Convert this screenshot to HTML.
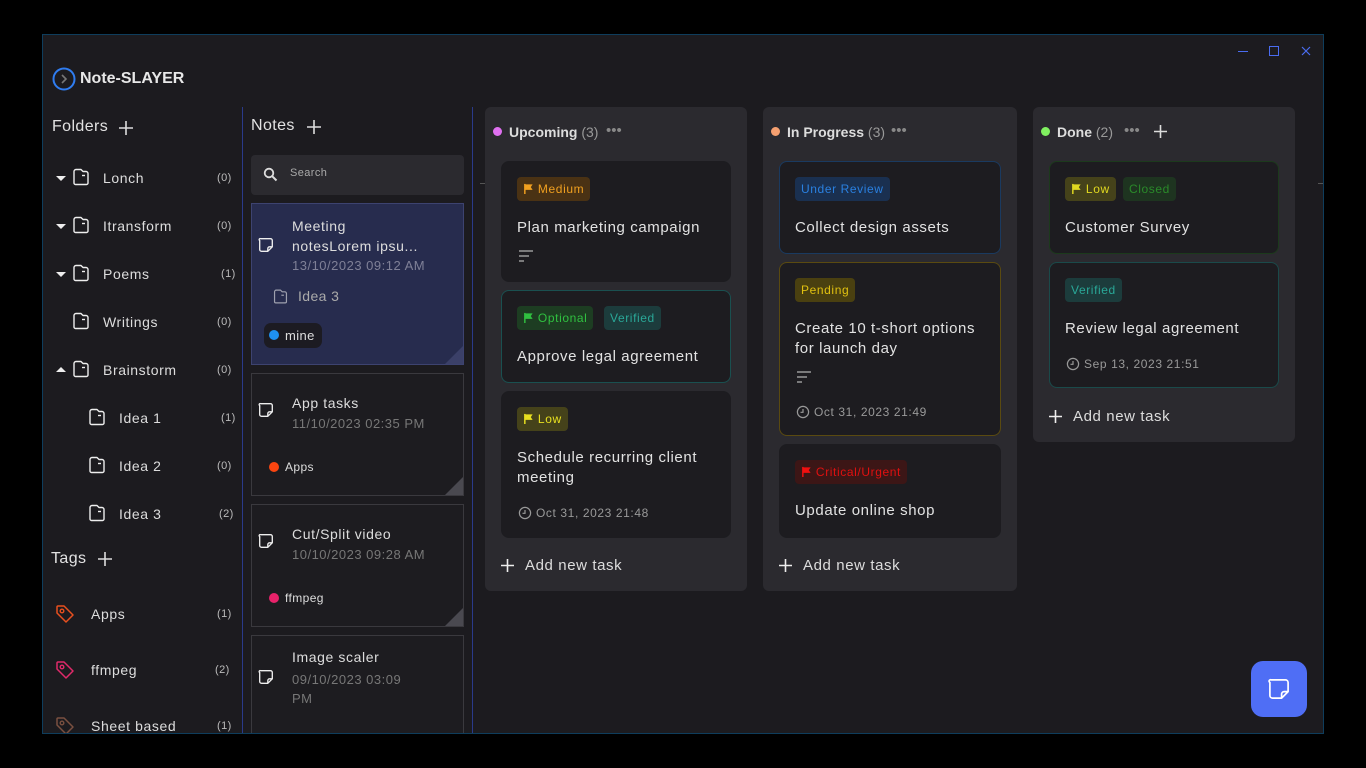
<!DOCTYPE html>
<html><head><meta charset="utf-8"><style>
*{box-sizing:border-box;margin:0;padding:0}
body{width:1366px;height:768px;background:#000;font-family:"Liberation Sans",sans-serif;color:#e6e6e6;position:relative;overflow:hidden;letter-spacing:0.4px}
.a{position:absolute}
#win{left:42px;top:34px;width:1282px;height:700px;background:#1c1b1f;border:1px solid #0e3d5c;overflow:hidden}
.t{font-size:14px;color:#ddd;white-space:nowrap;letter-spacing:0.6px}
.cnt{font-size:11px;color:#bbb}
.col{background:#2b2a2f;border-radius:6px}
.card{background:#1d1c20;border-radius:8px;border:1px solid #1d1c20}
.badge{position:absolute;height:24px;border-radius:4px;font-size:12px;line-height:24px;padding:0 6px;white-space:nowrap;letter-spacing:0.6px}
.ct{font-size:15px;color:#e2e2e2;line-height:20px;letter-spacing:0.6px;white-space:nowrap}
.dt{font-size:12px;color:#999;letter-spacing:0.6px}
.note{background:#1d1c20;border:1px solid #3a393e}
.corner{position:absolute;right:0;bottom:0;width:0;height:0;border-left:18px solid transparent;border-bottom:18px solid #4a4950}
</style></head><body>
<div id="win" class="a">
<div class="a" style="left:1195px;top:16px;width:10px;height:1px;background:#4a6cf0"></div>
<div class="a" style="left:1226px;top:11px;width:10px;height:10px;border:1px solid #4a6cf0"></div>
<svg class="a" style="left:1258px;top:11px" width="10" height="10"><path d="M1 1L9 9M9 1L1 9" stroke="#4a6cf0" stroke-width="1.2"/></svg>
<svg class="a" style="left:9px;top:32px" width="24" height="24"><circle cx="12" cy="12" r="10.5" fill="none" stroke="#2f7cf0" stroke-width="2"/><path d="M10 8l4 4-4 4" fill="none" stroke="#777" stroke-width="1.6"/></svg>
<div class="a" style="left:37px;top:35px;font-size:16px;font-weight:bold;color:#e8e8e8;letter-spacing:0">Note-SLAYER</div>
<div class="a" style="left:199px;top:72px;width:1px;height:628px;background:#2a3a8a"></div>
<div class="a" style="left:429px;top:72px;width:1px;height:628px;background:#2a3a8a"></div>
<div class="a" style="left:1275px;top:148px;width:8px;height:1px;background:#555"></div>
<div class="a" style="left:437px;top:148px;width:6px;height:1px;background:#555"></div>
<div class="a" style="left:9px;top:83px;font-size:16px;color:#e2e2e2">Folders</div>
<svg class="a" style="left:75px;top:85px" width="16" height="16"><path d="M8 1v14M1 8h14" stroke="#ddd" stroke-width="1.6"/></svg>
</div>
<svg width="0" height="0" style="position:absolute"><defs>
<symbol id="fold" viewBox="0 0 20 20"><path d="M5 2.5h5l2 2h3a2 2 0 012 2V16a1.5 1.5 0 01-1.5 1.5h-11A1.5 1.5 0 013 16V4.5a2 2 0 012-2z" fill="none" stroke="#eee" stroke-width="1.4" stroke-linejoin="round"/><path d="M11 8.5h3" stroke="#eee" stroke-width="1.4"/></symbol>
<symbol id="noteic" viewBox="0 0 20 20"><path d="M4 3h11a2 2 0 012 2v7l-5 5H5a2 2 0 01-2-2V5a1 1 0 011-2z" fill="none" stroke="#eee" stroke-width="1.5" stroke-linejoin="round"/><path d="M17 12h-3a2 2 0 00-2 2v3" fill="none" stroke="#eee" stroke-width="1.5"/></symbol>
<symbol id="tag" viewBox="0 0 20 20"><path d="M2 9V3a1 1 0 011-1h6l9 9-7 7z" fill="none" stroke="currentColor" stroke-width="1.5" stroke-linejoin="round"/><circle cx="7" cy="7" r="1.8" fill="none" stroke="currentColor" stroke-width="1.4"/></symbol>
<symbol id="flag" viewBox="0 0 12 12"><path d="M2 1v11" stroke="currentColor" stroke-width="1.6"/><path d="M2.5 1.5h8l-2 3 2 3h-8z" fill="currentColor"/></symbol>
<symbol id="clock" viewBox="0 0 14 14"><circle cx="7" cy="7" r="5.6" fill="none" stroke="#999" stroke-width="1.2"/><path d="M7 4v3.3H4.5" fill="none" stroke="#999" stroke-width="1.2"/></symbol>
<symbol id="desc" viewBox="0 0 16 14"><path d="M1 2h14M1 7h10M1 12h5" stroke="#999" stroke-width="1.6"/></symbol>
</defs></svg>

<div class="a" style="left:56px;top:176px;width:0;height:0;border-left:5px solid transparent;border-right:5px solid transparent;border-top:5px solid #eee"></div>
<div class="a" style="left:56px;top:224px;width:0;height:0;border-left:5px solid transparent;border-right:5px solid transparent;border-top:5px solid #eee"></div>
<div class="a" style="left:56px;top:272px;width:0;height:0;border-left:5px solid transparent;border-right:5px solid transparent;border-top:5px solid #eee"></div>
<div class="a" style="left:56px;top:367px;width:0;height:0;border-left:5px solid transparent;border-right:5px solid transparent;border-bottom:5px solid #eee"></div>
<svg class="a" style="left:71px;top:167px" width="20" height="20"><use href="#fold"/></svg><div class="a t" style="left:103px;top:170px">Lonch</div><div class="a cnt" style="left:217px;top:172px">(0)</div>
<svg class="a" style="left:71px;top:215px" width="20" height="20"><use href="#fold"/></svg><div class="a t" style="left:103px;top:218px">Itransform</div><div class="a cnt" style="left:217px;top:220px">(0)</div>
<svg class="a" style="left:71px;top:263px" width="20" height="20"><use href="#fold"/></svg><div class="a t" style="left:103px;top:266px">Poems</div><div class="a cnt" style="left:221px;top:268px">(1)</div>
<svg class="a" style="left:71px;top:311px" width="20" height="20"><use href="#fold"/></svg><div class="a t" style="left:103px;top:314px">Writings</div><div class="a cnt" style="left:217px;top:316px">(0)</div>
<svg class="a" style="left:71px;top:359px" width="20" height="20"><use href="#fold"/></svg><div class="a t" style="left:103px;top:362px">Brainstorm</div><div class="a cnt" style="left:217px;top:364px">(0)</div>
<svg class="a" style="left:87px;top:407px" width="20" height="20"><use href="#fold"/></svg><div class="a t" style="left:119px;top:410px">Idea 1</div><div class="a cnt" style="left:221px;top:412px">(1)</div>
<svg class="a" style="left:87px;top:455px" width="20" height="20"><use href="#fold"/></svg><div class="a t" style="left:119px;top:458px">Idea 2</div><div class="a cnt" style="left:217px;top:460px">(0)</div>
<svg class="a" style="left:87px;top:503px" width="20" height="20"><use href="#fold"/></svg><div class="a t" style="left:119px;top:506px">Idea 3</div><div class="a cnt" style="left:219px;top:508px">(2)</div>
<div class="a" style="left:51px;top:550px;font-size:16px;color:#e2e2e2">Tags</div>
<svg class="a" style="left:97px;top:551px" width="16" height="16"><path d="M8 1v14M1 8h14" stroke="#ddd" stroke-width="1.6"/></svg>
<svg class="a" style="left:55px;top:604px;color:#e8501f" width="20" height="20"><use href="#tag"/></svg><div class="a t" style="left:91px;top:606px">Apps</div><div class="a cnt" style="left:217px;top:608px">(1)</div>
<svg class="a" style="left:55px;top:660px;color:#e02a6a" width="20" height="20"><use href="#tag"/></svg><div class="a t" style="left:91px;top:662px">ffmpeg</div><div class="a cnt" style="left:215px;top:664px">(2)</div>
<svg class="a" style="left:55px;top:716px;color:#7a5040" width="20" height="20"><use href="#tag"/></svg><div class="a t" style="left:91px;top:718px">Sheet based</div><div class="a cnt" style="left:217px;top:720px">(1)</div>

<div class="a" style="left:251px;top:117px;font-size:16px;color:#e2e2e2">Notes</div>
<svg class="a" style="left:306px;top:119px" width="16" height="16"><path d="M8 1v14M1 8h14" stroke="#ddd" stroke-width="1.6"/></svg>
<div class="a" style="left:251px;top:155px;width:213px;height:40px;background:#2b2a2f;border-radius:4px"></div>
<svg class="a" style="left:263px;top:167px" width="15" height="15"><circle cx="6" cy="6" r="4.3" fill="none" stroke="#ddd" stroke-width="1.8"/><path d="M9.2 9.2l4.3 4.3" stroke="#ddd" stroke-width="2"/></svg>
<div class="a" style="left:290px;top:167px;font-size:11px;color:#aaa">Search</div>

<div class="a" style="left:251px;top:203px;width:213px;height:162px;background:#272c4e;border:1px solid #3d4370"><div class="corner" style="border-bottom-color:#3b4068"></div></div>
<svg class="a" style="left:257px;top:236px" width="18" height="18"><use href="#noteic"/></svg>
<div class="a t" style="left:292px;top:216px;line-height:20px">Meeting<br>notesLorem ipsu...</div>
<div class="a" style="left:292px;top:258px;font-size:13px;color:#7f8097;letter-spacing:0.5px">13/10/2023 09:12 AM</div>
<svg class="a" style="left:272px;top:288px;opacity:.6" width="17" height="17"><use href="#fold"/></svg>
<div class="a" style="left:298px;top:288px;font-size:14px;color:#aaa">Idea 3</div>
<div class="a" style="left:264px;top:323px;width:58px;height:25px;background:#1c1b22;border-radius:7px"></div>
<div class="a" style="left:269px;top:330px;width:10px;height:10px;border-radius:50%;background:#1e90f0"></div>
<div class="a" style="left:285px;top:328px;font-size:13px;color:#ddd">mine</div>

<div class="a note" style="left:251px;top:373px;width:213px;height:123px"><div class="corner"></div></div>
<svg class="a" style="left:257px;top:401px" width="18" height="18"><use href="#noteic"/></svg>
<div class="a t" style="left:292px;top:395px">App tasks</div>
<div class="a" style="left:292px;top:416px;font-size:13px;color:#777;letter-spacing:0.5px">11/10/2023 02:35 PM</div>
<div class="a" style="left:269px;top:462px;width:10px;height:10px;border-radius:50%;background:#fa4510"></div>
<div class="a" style="left:285px;top:460px;font-size:12px;color:#ddd">Apps</div>

<div class="a note" style="left:251px;top:504px;width:213px;height:123px"><div class="corner"></div></div>
<svg class="a" style="left:257px;top:532px" width="18" height="18"><use href="#noteic"/></svg>
<div class="a t" style="left:292px;top:526px">Cut/Split video</div>
<div class="a" style="left:292px;top:547px;font-size:13px;color:#777;letter-spacing:0.5px">10/10/2023 09:28 AM</div>
<div class="a" style="left:269px;top:593px;width:10px;height:10px;border-radius:50%;background:#e8226a"></div>
<div class="a" style="left:285px;top:591px;font-size:12px;color:#ddd">ffmpeg</div>

<div class="a note" style="left:251px;top:635px;width:213px;height:110px"></div>
<svg class="a" style="left:257px;top:668px" width="18" height="18"><use href="#noteic"/></svg>
<div class="a t" style="left:292px;top:649px">Image scaler</div>
<div class="a" style="left:292px;top:670px;font-size:13px;color:#777;line-height:19px;letter-spacing:0.5px">09/10/2023 03:09<br>PM</div>

<!-- Upcoming -->
<div class="a col" style="left:485px;top:107px;width:262px;height:484px"></div>
<div class="a" style="left:493px;top:127px;width:9px;height:9px;border-radius:50%;background:#e070f0"></div>
<div class="a" style="left:509px;top:124px;font-size:14px;font-weight:bold;color:#ddd;letter-spacing:0">Upcoming <span style="font-weight:normal;color:#999">(3)</span></div>
<div class="a" style="left:606px;top:122px;font-size:15px;color:#888;letter-spacing:0">•••</div>

<div class="a card" style="left:501px;top:161px;width:230px;height:121px"></div>
<div class="badge" style="left:517px;top:177px;background:#4a3214;color:#f0a020"><svg width="11" height="11" style="color:#f0a020;vertical-align:-1px"><use href="#flag"/></svg> Medium</div>
<div class="a ct" style="left:517px;top:218px">Plan marketing campaign</div>
<svg class="a" style="left:518px;top:249px" width="16" height="14"><use href="#desc"/></svg>

<div class="a card" style="left:501px;top:290px;width:230px;height:93px;border-color:#1a5050"></div>
<div class="badge" style="left:517px;top:306px;background:#1d3d22;color:#30c040"><svg width="11" height="11" style="color:#30c040;vertical-align:-1px"><use href="#flag"/></svg> Optional</div>
<div class="badge" style="left:604px;top:306px;background:#1c3c3c;color:#2aa898">Verified</div>
<div class="a ct" style="left:517px;top:347px">Approve legal agreement</div>

<div class="a card" style="left:501px;top:391px;width:230px;height:147px"></div>
<div class="badge" style="left:517px;top:407px;background:#45421a;color:#e8e020"><svg width="11" height="11" style="color:#e8e020;vertical-align:-1px"><use href="#flag"/></svg> Low</div>
<div class="a ct" style="left:517px;top:448px">Schedule recurring client<br>meeting</div>
<svg class="a" style="left:518px;top:506px" width="14" height="14"><use href="#clock"/></svg>
<div class="a dt" style="left:536px;top:506px">Oct 31, 2023 21:48</div>
<svg class="a" style="left:501px;top:559px" width="13" height="13"><path d="M6.5 0v13M0 6.5h13" stroke="#eee" stroke-width="1.6"/></svg>
<div class="a ct" style="left:525px;top:556px;color:#ddd">Add new task</div>

<!-- In Progress -->
<div class="a col" style="left:763px;top:107px;width:254px;height:484px"></div>
<div class="a" style="left:771px;top:127px;width:9px;height:9px;border-radius:50%;background:#f5a070"></div>
<div class="a" style="left:787px;top:124px;font-size:14px;font-weight:bold;color:#ddd;letter-spacing:0">In Progress <span style="font-weight:normal;color:#999">(3)</span></div>
<div class="a" style="left:891px;top:122px;font-size:15px;color:#888;letter-spacing:0">•••</div>

<div class="a card" style="left:779px;top:161px;width:222px;height:93px;border-color:#1a3a60"></div>
<div class="badge" style="left:795px;top:177px;background:#1a3050;color:#2a80e0">Under Review</div>
<div class="a ct" style="left:795px;top:218px">Collect design assets</div>

<div class="a card" style="left:779px;top:262px;width:222px;height:174px;border-color:#5a4a10"></div>
<div class="badge" style="left:795px;top:278px;background:#4a4010;color:#e0c010">Pending</div>
<div class="a ct" style="left:795px;top:319px">Create 10 t-short options<br>for launch day</div>
<svg class="a" style="left:796px;top:370px" width="16" height="14"><use href="#desc"/></svg>
<svg class="a" style="left:796px;top:405px" width="14" height="14"><use href="#clock"/></svg>
<div class="a dt" style="left:814px;top:405px">Oct 31, 2023 21:49</div>

<div class="a card" style="left:779px;top:444px;width:222px;height:94px"></div>
<div class="badge" style="left:795px;top:460px;background:#3c1616;color:#e01010"><svg width="11" height="11" style="color:#f01010;vertical-align:-1px"><use href="#flag"/></svg> Critical/Urgent</div>
<div class="a ct" style="left:795px;top:501px">Update online shop</div>
<svg class="a" style="left:779px;top:559px" width="13" height="13"><path d="M6.5 0v13M0 6.5h13" stroke="#eee" stroke-width="1.6"/></svg>
<div class="a ct" style="left:803px;top:556px;color:#ddd">Add new task</div>

<!-- Done -->
<div class="a col" style="left:1033px;top:107px;width:262px;height:335px"></div>
<div class="a" style="left:1041px;top:127px;width:9px;height:9px;border-radius:50%;background:#80f060"></div>
<div class="a" style="left:1057px;top:124px;font-size:14px;font-weight:bold;color:#ddd;letter-spacing:0">Done <span style="font-weight:normal;color:#999">(2)</span></div>
<div class="a" style="left:1124px;top:122px;font-size:15px;color:#888;letter-spacing:0">•••</div>
<svg class="a" style="left:1154px;top:125px" width="13" height="13"><path d="M6.5 0v13M0 6.5h13" stroke="#ddd" stroke-width="1.6"/></svg>

<div class="a card" style="left:1049px;top:161px;width:230px;height:93px;border-color:#1c3a1c"></div>
<div class="badge" style="left:1065px;top:177px;background:#45421a;color:#e0d820"><svg width="11" height="11" style="color:#e0d820;vertical-align:-1px"><use href="#flag"/></svg> Low</div>
<div class="badge" style="left:1123px;top:177px;background:#1e3420;color:#2a8a2a">Closed</div>
<div class="a ct" style="left:1065px;top:218px">Customer Survey</div>

<div class="a card" style="left:1049px;top:262px;width:230px;height:126px;border-color:#1a4a4a"></div>
<div class="badge" style="left:1065px;top:278px;background:#1c3c3c;color:#2aa898">Verified</div>
<div class="a ct" style="left:1065px;top:319px">Review legal agreement</div>
<svg class="a" style="left:1066px;top:357px" width="14" height="14"><use href="#clock"/></svg>
<div class="a dt" style="left:1084px;top:357px">Sep 13, 2023 21:51</div>
<svg class="a" style="left:1049px;top:410px" width="13" height="13"><path d="M6.5 0v13M0 6.5h13" stroke="#eee" stroke-width="1.6"/></svg>
<div class="a ct" style="left:1073px;top:407px;color:#ddd">Add new task</div>

<!-- FAB -->
<div class="a" style="left:1251px;top:661px;width:56px;height:56px;background:#4f6ef5;border-radius:12px"></div>
<svg class="a" style="left:1266px;top:676px" width="26" height="26" viewBox="0 0 20 20"><path d="M4 3h11a2 2 0 012 2v7l-5 5H5a2 2 0 01-2-2V5a1 1 0 011-2z" fill="none" stroke="#fff" stroke-width="1.3" stroke-linejoin="round"/><path d="M17 12h-3a2 2 0 00-2 2v3" fill="none" stroke="#fff" stroke-width="1.3"/></svg>

<div class="a" style="left:0;top:734px;width:1366px;height:34px;background:#000"></div>
<div class="a" style="left:42px;top:733px;width:1282px;height:1px;background:#0e3d5c"></div>
</body></html>
